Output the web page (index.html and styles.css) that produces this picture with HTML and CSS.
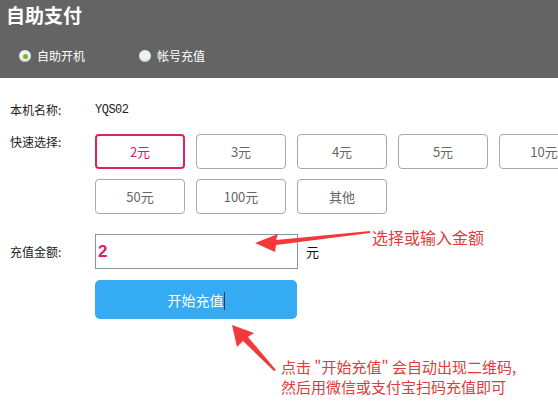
FILE: index.html
```html
<!DOCTYPE html>
<html lang="zh-CN">
<head>
<meta charset="UTF-8">
<meta name="viewport" content="width=device-width, initial-scale=1.0">
<title>自助支付</title>
<link rel="stylesheet" href="styles.css">
</head>
<body>

<div class="page">
    <div class="header">
        <h1>自助支付</h1>
        <div class="modes">
            <label class="mode"><span class="radio checked"></span>自助开机</label>
            <label class="mode"><span class="radio"></span>帐号充值</label>
        </div>
    </div>

    <div class="content">
        <div class="row name-row">
            <span class="label">本机名称:</span>
            <span class="machine">YQS02</span>
        </div>

        <div class="row quick-row">
            <span class="label">快速选择:</span>
            <div class="amounts">
                <button class="amount active">2元</button>
                <button class="amount">3元</button>
                <button class="amount">4元</button>
                <button class="amount">5元</button>
                <button class="amount">10元</button>
                <button class="amount">50元</button>
                <button class="amount">100元</button>
                <button class="amount">其他</button>
            </div>
        </div>

        <div class="row money-row">
            <span class="label">充值金额:</span>
            <div class="money-box">2</div>
            <span class="unit">元</span>
        </div>

        <div class="row submit-row">
            <button class="submit">开始充值<span class="caret"></span></button>
        </div>
    </div>

    <svg class="notes" width="558" height="410" viewBox="0 0 558 410">
        <path d="M370 231 L276 240 L278 234 L255 243 L275 252 L276 245 L370 233 Z" fill="#f23a3a"/>
        <path d="M276 370 L248 337 L254 333 L232 325 L237 347 L243 341 L274 371 Z" fill="#f23a3a"/>
    </svg>
    <div class="note note-input">选择或输入金额</div>
    <div class="note note-submit">
        <div>点击 "开始充值" 会自动出现二维码,</div>
        <div>然后用微信或支付宝扫码充值即可</div>
    </div>
</div>

</body>
</html>
```

FILE: styles.css
```css
body {
    margin: 0;
    padding: 0;
    background-color: #fff;
    font-family: "Noto Sans CJK SC", "Liberation Sans", sans-serif;
    font-size: 12px;
    color: #222;
}

.page {
    position: relative;
    width: 558px;
    height: 410px;
    overflow: hidden;
}

.header {
    height: 78px;
    background-color: #646464;
    color: #fff;
    padding: 0 6px;
}

.header h1 {
    margin: 0;
    padding-top: 2px;
    font-size: 19px;
    line-height: 26px;
    font-weight: bold;
}

.modes {
    display: flex;
    padding: 20px 0 0 13px;
}

.mode {
    display: flex;
    align-items: center;
    font-size: 12px;
    line-height: 16px;
}

.mode + .mode {
    margin-left: 54px;
}

.radio {
    width: 12px;
    height: 12px;
    border-radius: 50%;
    background-color: #eef0f2;
    box-shadow: inset 0 -1px 1px #bbb;
    margin-right: 6px;
    display: flex;
    align-items: center;
    justify-content: center;
}

.radio.checked::after {
    content: "";
    width: 5px;
    height: 5px;
    border-radius: 50%;
    background-color: #7cb518;
}

.content {
    padding: 22px 0 0 10px;
}

.row {
    display: flex;
}

.label {
    width: 85px;
    flex-shrink: 0;
}

.name-row {
    line-height: 20px;
    height: 20px;
}

.machine {
    font-family: "Liberation Mono", monospace;
    font-size: 12px;
    letter-spacing: -0.5px;
}

.quick-row {
    margin-top: 14px;
}

.quick-row .label {
    line-height: 16px;
}

.amounts {
    display: flex;
    flex-wrap: wrap;
    width: 505px;
    flex-shrink: 0;
    gap: 10px 11px;
}

.amount {
    width: 90px;
    height: 35px;
    padding: 0;
    background-color: #fff;
    border: 1px solid #a8a8a8;
    border-radius: 4px;
    font-family: "Noto Sans CJK SC", "Liberation Sans", sans-serif;
    font-size: 13px;
    color: #666;
    cursor: pointer;
}

.amount.active {
    border: 2px solid #df1f66;
    color: #c8206a;
}

.money-row {
    margin-top: 20px;
    height: 35px;
    align-items: center;
}

.money-box {
    width: 199px;
    height: 33px;
    border: 1px solid #8995a6;
    font-family: "Liberation Sans", sans-serif;
    font-size: 17px;
    font-weight: bold;
    color: #e01a6a;
    line-height: 33px;
    padding-left: 2px;
    box-sizing: content-box;
}

.unit {
    margin-left: 8px;
    font-size: 13px;
    color: #111;
}

.submit-row {
    margin-top: 11px;
    padding-left: 85px;
}

.submit {
    width: 202px;
    height: 39px;
    background-color: #35abf4;
    color: #fff;
    border: none;
    border-radius: 5px;
    font-family: "Noto Sans CJK SC", "Liberation Sans", sans-serif;
    font-size: 14px;
    cursor: pointer;
}

.caret {
    display: inline-block;
    width: 1px;
    height: 18px;
    background-color: #1b3a6b;
    vertical-align: -4px;
}

.notes {
    position: absolute;
    top: 0;
    left: 0;
}

.note {
    position: absolute;
    color: #e03a3a;
    font-size: 15px;
    line-height: 20px;
}

.note-input {
    left: 372px;
    top: 227px;
    font-size: 16px;
}

.note-submit {
    left: 281px;
    top: 357px;
}
```
